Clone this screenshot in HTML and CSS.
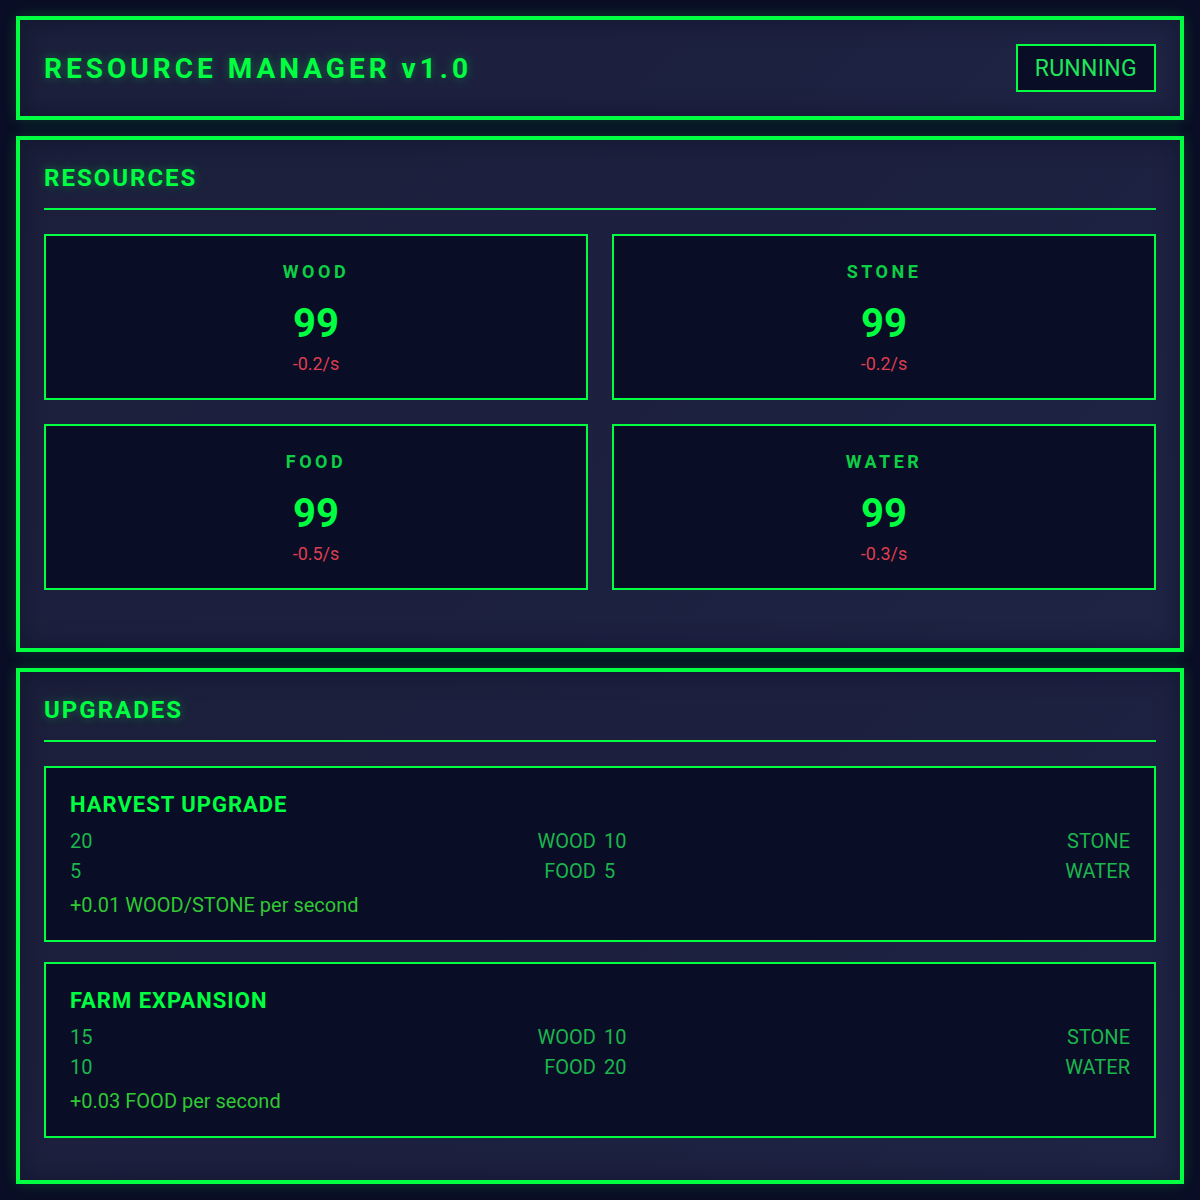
FILE: index.html
```html
<!DOCTYPE html>
<html lang="en">
<head>
<meta charset="utf-8">
<title>Resource Manager</title>
<link rel="stylesheet" href="styles.css">
</head>
<body>
<div class="app">
  <header class="panel header">
    <h1 class="app-title">RESOURCE MANAGER v1.0</h1>
    <div class="status">RUNNING</div>
  </header>

  <section class="panel resources">
    <h2 class="panel-title">RESOURCES</h2>
    <div class="res-grid">
      <div class="res-card">
        <div class="res-label">WOOD</div>
        <div class="res-value">99</div>
        <div class="res-rate">-0.2/s</div>
      </div>
      <div class="res-card">
        <div class="res-label">STONE</div>
        <div class="res-value">99</div>
        <div class="res-rate">-0.2/s</div>
      </div>
      <div class="res-card">
        <div class="res-label">FOOD</div>
        <div class="res-value">99</div>
        <div class="res-rate">-0.5/s</div>
      </div>
      <div class="res-card">
        <div class="res-label">WATER</div>
        <div class="res-value">99</div>
        <div class="res-rate">-0.3/s</div>
      </div>
    </div>
  </section>

  <section class="panel upgrades">
    <h2 class="panel-title">UPGRADES</h2>
    <div class="upgrade-list">
      <div class="upgrade">
        <div class="upgrade-name">HARVEST UPGRADE</div>
        <div class="costs">
          <div class="cost"><span>20</span><span>WOOD</span></div>
          <div class="cost"><span>10</span><span>STONE</span></div>
          <div class="cost"><span>5</span><span>FOOD</span></div>
          <div class="cost"><span>5</span><span>WATER</span></div>
        </div>
        <div class="effect">+0.01 WOOD/STONE per second</div>
      </div>
      <div class="upgrade">
        <div class="upgrade-name">FARM EXPANSION</div>
        <div class="costs">
          <div class="cost"><span>15</span><span>WOOD</span></div>
          <div class="cost"><span>10</span><span>STONE</span></div>
          <div class="cost"><span>10</span><span>FOOD</span></div>
          <div class="cost"><span>20</span><span>WATER</span></div>
        </div>
        <div class="effect">+0.03 FOOD per second</div>
      </div>
    </div>
  </section>
</div>
</body>
</html>
```

FILE: styles.css
```css
* {
  box-sizing: border-box;
}

html, body {
  margin: 0;
  padding: 0;
}

body {
  background: #0a0d26;
  font-family: Roboto, "Liberation Sans", sans-serif;
  color: #00ff41;
}

.app {
  padding: 16px;
  display: flex;
  flex-direction: column;
  gap: 16px;
}

.panel {
  border: 4px solid #00ff41;
  background: linear-gradient(135deg, #1b1f3b 0%, #1d2140 60%, #1f2444 100%);
  box-shadow: 0 0 14px rgba(0, 255, 65, 0.18), inset 0 0 24px rgba(5, 8, 30, 0.45);
  padding: 24px;
}

.header {
  display: flex;
  align-items: center;
  justify-content: space-between;
}

.app-title {
  margin: 0;
  font-size: 28px;
  font-weight: 700;
  letter-spacing: 4px;
  line-height: normal;
  color: #00ff41;
  text-shadow: 0 0 10px rgba(0, 255, 65, 0.35);
}

.status {
  border: 2px solid #00ff41;
  background: #0a0d26;
  color: #1ee65a;
  font-size: 23px;
  line-height: 28px;
  padding: 9px 17px 7px;
  letter-spacing: 0.3px;
}

.panel-title {
  margin: 0 0 24px;
  font-size: 24px;
  font-weight: 700;
  letter-spacing: 2px;
  line-height: normal;
  padding-bottom: 16px;
  border-bottom: 2px solid #00ff41;
  color: #00ff41;
  text-shadow: 0 0 10px rgba(0, 255, 65, 0.35);
}

.res-grid {
  display: grid;
  grid-template-columns: 1fr 1fr;
  gap: 24px;
  margin-bottom: 34px;
}

.res-card {
  border: 2px solid #00ff41;
  background: #0a0d26;
  text-align: center;
  padding: 24px 24px 24px;
}

.res-label {
  font-size: 18px;
  line-height: 24px;
  font-weight: 700;
  letter-spacing: 3.5px;
  color: #0dcf45;
  margin-bottom: 12px;
}

.res-value {
  font-size: 40px;
  line-height: 56px;
  font-weight: 700;
  color: #00ff41;
}

.res-rate {
  margin-top: 1px;
  font-size: 18px;
  line-height: 21px;
  color: #dc3f4f;
}

.upgrades {
  padding-bottom: 42px;
}

.upgrade-list {
  display: flex;
  flex-direction: column;
  gap: 20px;
}

.upgrade {
  border: 2px solid #00ff41;
  background: #0a0d26;
  padding: 24px 24px 23px;
}

.upgrade-name {
  font-size: 22px;
  font-weight: 700;
  letter-spacing: 1px;
  line-height: normal;
  color: #00ff41;
  margin-bottom: 9px;
}

.costs {
  display: grid;
  grid-template-columns: 1fr 1fr;
  column-gap: 8px;
  font-size: 20px;
  line-height: 30px;
  color: #1bb54c;
}

.cost {
  display: flex;
  justify-content: space-between;
}

.effect {
  margin-top: 7px;
  font-size: 20px;
  line-height: normal;
  color: #30c833;
}
```
